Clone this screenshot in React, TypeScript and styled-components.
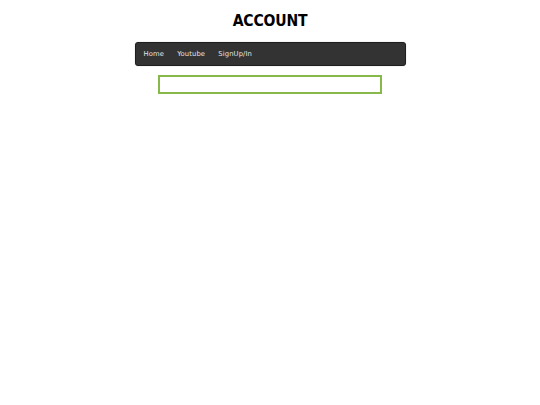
import React from "react"
import styled, { createGlobalStyle } from "styled-components"

const GlobalStyle = createGlobalStyle`
  html, body {
    margin: 0;
    padding: 0;
    background: #ffffff;
    font-family: "DejaVu Sans", Verdana, sans-serif;
  }
`

const Page = styled.div`
  display: flex;
  flex-direction: column;
  align-items: center;
  padding-top: 13px;
`

const Title = styled.h1`
  margin: 0;
  font-size: 14px;
  line-height: 17px;
  font-weight: bold;
  color: #000;
  letter-spacing: -0.2px;
  transform: scaleY(1.1);
`

const NavBar = styled.nav`
  box-sizing: border-box;
  width: 271px;
  height: 24px;
  margin-top: 12px;
  display: flex;
  align-items: center;
  padding-left: 1.5px;
  background: #333333;
  border: 1px solid #1e1e1e;
  border-radius: 3px;
  box-shadow: 0 0 1px rgba(0, 0, 0, 0.4);
`

const NavLink = styled.a`
  padding: 0 6.6px;
  font-size: 6.8px;
  letter-spacing: 0.1px;
  color: #e4e4e4;
  text-decoration: none;
  cursor: pointer;
`

const SearchBox = styled.input`
  box-sizing: border-box;
  width: 224px;
  height: 19px;
  margin-top: 9px;
  border: 2px solid #86b84a;
  outline: none;
  background: #fff;
`

const links = ["Home", "Youtube", "SignUp/In"]

export default function App() {
  return (
    <>
      <GlobalStyle />
      <Page>
        <Title>ACCOUNT</Title>
        <NavBar>
          {links.map(label => (
            <NavLink key={label}>{label}</NavLink>
          ))}
        </NavBar>
        <SearchBox type="text" />
      </Page>
    </>
  )
}
